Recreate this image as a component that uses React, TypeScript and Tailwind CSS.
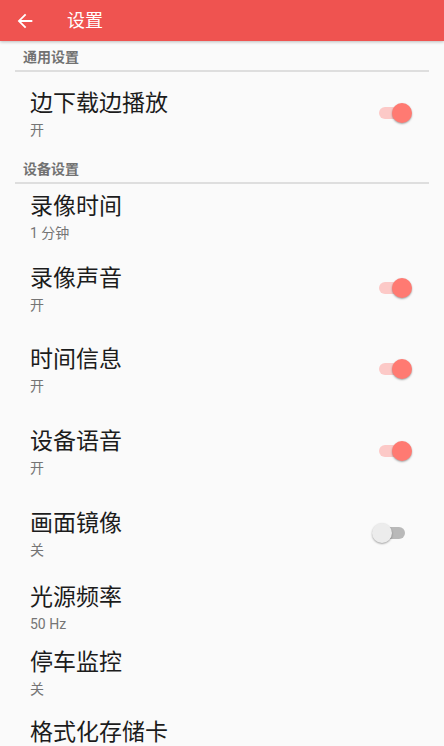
import type { ReactNode } from 'react';

type Item = {
  title: string;
  sub: string;
  toggle?: boolean;
  gap: string;
};

const general: Item[] = [{ title: '边下载边播放', sub: '开', toggle: true, gap: 'mt-[17px]' }];

const device: Item[] = [
  { title: '录像时间', sub: '1 分钟', gap: 'mt-[8px]' },
  { title: '录像声音', sub: '开', toggle: true, gap: 'mt-[21px]' },
  { title: '时间信息', sub: '开', toggle: true, gap: 'mt-[30px]' },
  { title: '设备语音', sub: '开', toggle: true, gap: 'mt-[31px]' },
  { title: '画面镜像', sub: '关', toggle: false, gap: 'mt-[31px]' },
  { title: '光源频率', sub: '50 Hz', gap: 'mt-[23px]' },
  { title: '停车监控', sub: '关', gap: 'mt-[14px]' },
  { title: '格式化存储卡', sub: '', gap: 'mt-[19px]' },
];

function Switch({ on }: { on: boolean }) {
  return (
    <div className="relative w-[40px] h-[20px] shrink-0 mb-[3px]">
      <div
        className={
          on
            ? 'absolute left-[7px] top-[4px] w-[26px] h-[12px] rounded-full bg-[#fcc9c7]'
            : 'absolute left-[7px] top-[4px] w-[26px] h-[12px] rounded-full bg-[#b9b9b9]'
        }
      />
      <div
        className={
          on
            ? 'absolute left-[20px] top-0 w-[20px] h-[20px] rounded-full bg-[#ff7a72] shadow-[0_1px_2px_rgba(0,0,0,0.35)]'
            : 'absolute left-0 top-0 w-[20px] h-[20px] rounded-full bg-[#ececec] shadow-[0_1px_2px_rgba(0,0,0,0.35)]'
        }
      />
    </div>
  );
}

function Row({ item }: { item: Item }) {
  return (
    <div className={`flex items-center pl-[30px] pr-[32px] ${item.gap}`}>
      <div className="flex-1 flex flex-col">
        <div className="text-[23px] leading-[30px] text-[#1c1c1c]">{item.title}</div>
        {item.sub && <div className="mt-px text-[14px] leading-[20px] text-[#757575]">{item.sub}</div>}
      </div>
      {item.toggle !== undefined && <Switch on={item.toggle} />}
    </div>
  );
}

function Section({ label, top, children }: { label: string; top: string; children: ReactNode }) {
  return (
    <div className="flex flex-col">
      <div className={`pl-[23px] text-[14px] leading-[20px] font-bold text-[#727272] ${top}`}>{label}</div>
      <div className="ml-[15px] mr-[15px] mt-[3px] h-[2px] bg-[#dedede]" />
      {children}
    </div>
  );
}

export default function App() {
  return (
    <div
      className="h-[746px] w-[444px] overflow-hidden bg-[#fafafa] flex flex-col"
      style={{ fontFamily: '"Roboto", "Noto Sans CJK SC", sans-serif' }}
    >
      <header className="h-[41px] shrink-0 bg-[#ef5350] flex items-center shadow-[0_1px_3px_rgba(0,0,0,0.25)] z-10">
        <svg width="22" height="22" viewBox="0 0 24 24" className="ml-[14px] fill-white">
          <path d="M20 11H7.83l5.59-5.59L12 4l-8 8 8 8 1.41-1.41L7.83 13H20v-2z" />
        </svg>
        <span className="ml-[31px] text-[18px] text-white">设置</span>
      </header>

      <Section label="通用设置" top="mt-[6px]">
        {general.map(i => (
          <Row key={i.title} item={i} />
        ))}
      </Section>

      <Section label="设备设置" top="mt-[19px]">
        {device.map(i => (
          <Row key={i.title} item={i} />
        ))}
      </Section>
    </div>
  );
}
